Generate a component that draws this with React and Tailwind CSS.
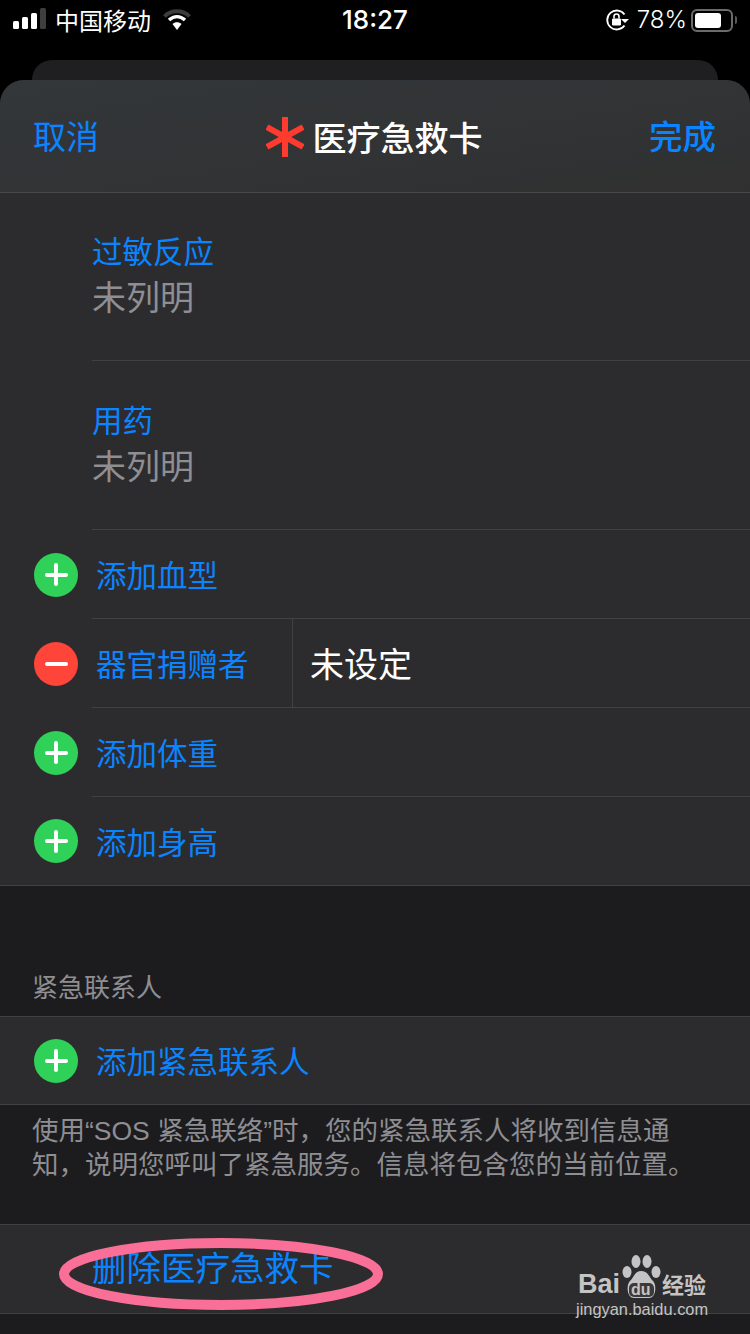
import React from 'react';

const font = { fontFamily: '"Noto Sans CJK SC", "Noto Sans", sans-serif' };
const latin = { fontFamily: '"Liberation Sans", sans-serif' };

function StatusBar() {
  return (
    <div className="h-[60px] pb-[20px] flex items-center justify-between text-white relative">
      <div className="flex items-center">
        <svg width="34" height="24" viewBox="0 0 34 24" className="ml-[12px]">
          <rect x="1" y="13" width="6" height="8" rx="1.5" fill="#fff" />
          <rect x="10" y="9" width="6" height="12" rx="1.5" fill="#fff" />
          <rect x="19" y="5" width="6" height="16" rx="1.5" fill="#fff" />
          <rect x="28" y="0" width="6" height="21" rx="1.5" fill="#3e3e3e" />
        </svg>
        <span className="ml-[9px] text-[24px] leading-none">中国移动</span>
        <svg width="30" height="24" viewBox="0 0 30 24" className="ml-[11px]">
          <path d="M2.5 8.5 C9 1.5 21 1.5 27.5 8.5" fill="none" stroke="#3c3c3c" strokeWidth="4" />
          <path d="M7 12 C12 7.5 18 7.5 23 12" fill="none" stroke="#fff" strokeWidth="3.5" />
          <path d="M10.5 16 C13 13.5 17 13.5 19.5 16 L15 22 Z" fill="#fff" />
        </svg>
      </div>
      <span className="absolute left-[342px] top-[4px] text-[26px] leading-[32px] font-medium" style={{ fontFamily: 'Inter, sans-serif' }}>18:27</span>
      <div className="flex items-center">
        <svg width="24" height="22" viewBox="0 0 24 22">
          <path d="M19.5 16.5 A9.5 9.5 0 1 1 19.5 5.5" fill="none" stroke="#fff" strokeWidth="1.8" />
          <path d="M20 14 L24 10 L16 10 Z" fill="#fff" />
          <rect x="7" y="9.5" width="9" height="7" rx="1.2" fill="#fff" />
          <path d="M9 9.5 V7.5 A2.5 2.5 0 0 1 14 7.5 V9.5" fill="none" stroke="#fff" strokeWidth="1.6" />
        </svg>
        <span className="ml-[8px] text-[24px] leading-none font-light" style={{ fontFamily: 'Inter, sans-serif' }}>78%</span>
        <div className="ml-[4px] mr-[17px] w-[42px] h-[23px] rounded-[6px] border-2 border-[#6b6b6b] p-[2px] relative">
          <div className="h-full w-[75%] rounded-[3px] bg-white" />
          <div className="absolute -right-[6px] top-[5px] w-[2px] h-[8px] bg-[#5a5a5a] rounded-r" />
        </div>
      </div>
    </div>
  );
}

function Asterisk() {
  return (
    <svg width="38" height="40" viewBox="0 0 38 40">
      <g stroke="#ff3b30" strokeWidth="6">
        <path d="M19 0 V40" />
        <path d="M1 10 L37 30" />
        <path d="M1 30 L37 10" />
      </g>
    </svg>
  );
}

function RoundIcon({ type }) {
  return (
    <div className={`w-[44px] h-[44px] rounded-full flex items-center justify-center relative shrink-0 ${type === 'add' ? 'bg-[#30d158]' : 'bg-[#ff453a]'}`}>
      <div className="w-[23px] h-[4px] rounded-full bg-white" />
      {type === 'add' && <div className="absolute w-[4px] h-[23px] rounded-full bg-white" />}
    </div>
  );
}

function InfoRow({ label, className }) {
  return (
    <div className={`ml-[92px] border-b border-[#414144] ${className}`}>
      <div className="text-[30.5px] leading-[44px] text-[#0a84ff]">{label}</div>
      <div className="text-[34px] leading-[48px] text-[#8e8e93]">未列明</div>
    </div>
  );
}

function AddRow({ label, type = 'add', border = true, value, height = 'h-[89px]' }) {
  return (
    <div className={`flex items-center pl-[34px] ${height}`}>
      <RoundIcon type={type} />
      <div className={`ml-[14px] flex-1 h-full flex items-center ${border ? 'border-b border-[#414144]' : ''}`}>
        <span className={`text-[30.5px] leading-none text-[#0a84ff] pl-[4px] ${value ? 'w-[200px]' : ''}`}>{label}</span>
        {value && (
          <div className="h-full flex items-center border-l border-[#414144] pl-[17px]">
            <span className="text-[34px] leading-none text-white">{value}</span>
          </div>
        )}
      </div>
    </div>
  );
}

function Watermark() {
  return (
    <div className="absolute left-[576px] top-[1255px] w-[134px] h-[62px] text-[#c4c4c4]">
      <svg width="40" height="44" viewBox="0 0 40 44" className="absolute left-[45px] top-0">
        <g fill="#c4c4c4">
          <ellipse cx="6" cy="17" rx="4.5" ry="6" />
          <ellipse cx="15" cy="6.5" rx="4.5" ry="6.5" />
          <ellipse cx="26" cy="6.5" rx="4.5" ry="6.5" />
          <ellipse cx="35" cy="17" rx="4.5" ry="6" />
          <path d="M20 16 C14 16 13 22 9 26 C5 30 6 43 13 43 L28 43 C35 43 36 30 32 26 C28 22 27 16 20 16 Z" />
          <rect x="8" y="28" width="25" height="14" rx="5" fill="#3a3a3c" />
        </g>
      </svg>
      <div className="absolute left-[2px] top-[17px] text-[27px] leading-[24px] font-bold" style={latin}>Bai</div>
      <div className="absolute left-[55px] top-[28px] text-[16px] leading-[14px] font-bold" style={latin}>du</div>
      <div className="absolute left-[86px] top-[16px] text-[22px] leading-[24px] font-bold whitespace-nowrap">经验</div>
      <div className="absolute left-0 top-[46px] text-[16.4px] leading-[16px] whitespace-nowrap" style={latin}>jingyan.baidu.com</div>
    </div>
  );
}

export default function App() {
  return (
    <div className="relative w-[750px] h-[1334px] overflow-hidden bg-black" style={font}>
      <StatusBar />
      <div className="mx-[32px] h-[20px] rounded-t-[20px] bg-[#1f1f21]" />

      <div className="rounded-t-[24px] bg-[#1c1c1e] h-[1254px]">
        <div className="h-[113px] rounded-t-[24px] border-b border-[#48484a] bg-gradient-to-br from-[#33373a] to-[#303030] flex items-center justify-between pl-[33px] pr-[34px] pb-[2px]">
          <span className="text-[33px] leading-none text-[#0a84ff]">取消</span>
          <div className="flex items-center gap-[9px] mt-[4px]">
            <Asterisk />
            <span className="text-[34px] leading-none font-medium text-white">医疗急救卡</span>
          </div>
          <span className="text-[33.5px] leading-none font-medium text-[#0a84ff]">完成</span>
        </div>

        <div className="bg-[#2c2c2e] border-b border-[#414144]">
          <InfoRow label="过敏反应" className="h-[168px] pt-[35px]" />
          <InfoRow label="用药" className="h-[169px] pt-[36px]" />
          <AddRow label="添加血型" />
          <AddRow label="器官捐赠者" type="remove" value="未设定" />
          <AddRow label="添加体重" />
          <AddRow label="添加身高" border={false} height="h-[88px]" />
        </div>

        <div className="h-[130px] flex items-end px-[32px] pb-[12px]">
          <span className="text-[26px] leading-[36px] text-[#8e8e93]">紧急联系人</span>
        </div>

        <div className="bg-[#2c2c2e] border-y border-[#414144]">
          <AddRow label="添加紧急联系人" border={false} height="h-[87px]" />
        </div>

        <div className="h-[119px] px-[32px] pt-[8px] text-[26.5px] leading-[32px] text-[#8e8e93]">
          <div className="whitespace-nowrap">
            使用<span style={latin}>“SOS </span>紧急联络<span style={latin}>”</span>时，您的紧急联系人将收到信息通
          </div>
          <div className="whitespace-nowrap">知，说明您呼叫了紧急服务。信息将包含您的当前位置。</div>
        </div>

        <div className="h-[90px] pb-[6px] bg-[#2c2c2e] border-y border-[#414144] flex items-center pl-[92px]">
          <span className="text-[34.5px] leading-none text-[#0a84ff]">删除医疗急救卡</span>
        </div>
      </div>

      {/* pink annotation drawn over the screenshot */}
      <svg width="330" height="80" viewBox="0 0 330 80" className="absolute left-[56px] top-[1234px]">
        <ellipse cx="165" cy="40" rx="157" ry="31" fill="none" stroke="#f96f97" strokeWidth="10" />
      </svg>
      <Watermark />
    </div>
  );
}
